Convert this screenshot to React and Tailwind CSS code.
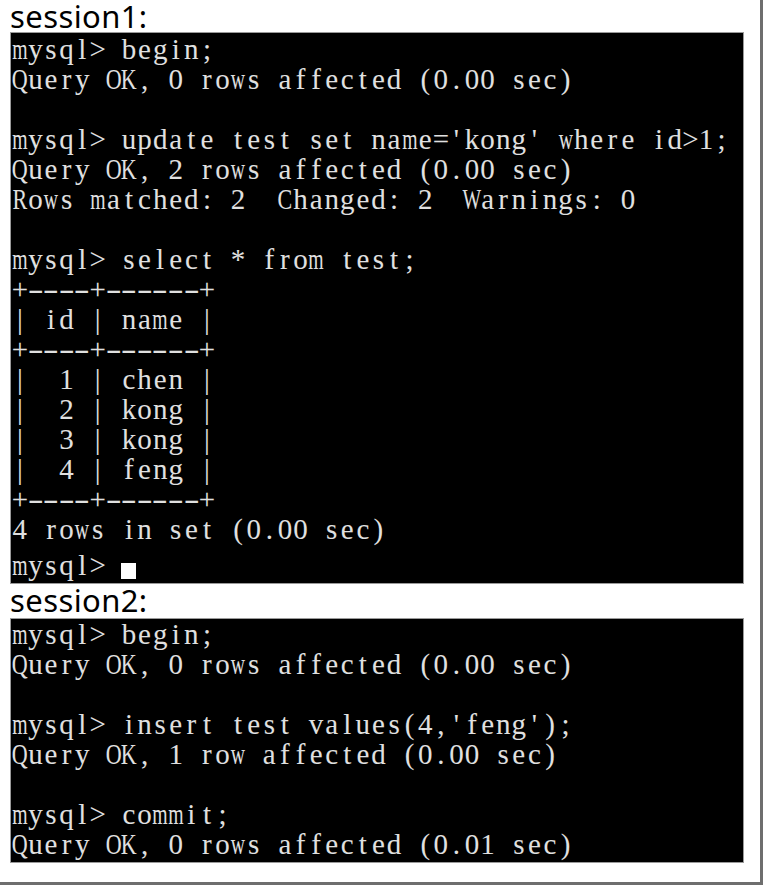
import React from "react";

const block1 = [
  "mysql> begin;",
  "Query OK, 0 rows affected (0.00 sec)",
  "",
  "mysql> update test set name='kong' where id>1;",
  "Query OK, 2 rows affected (0.00 sec)",
  "Rows matched: 2  Changed: 2  Warnings: 0",
  "",
  "mysql> select * from test;",
  "+----+------+",
  "| id | name |",
  "+----+------+",
  "|  1 | chen |",
  "|  2 | kong |",
  "|  3 | kong |",
  "|  4 | feng |",
  "+----+------+",
  "4 rows in set (0.00 sec)",
];

const block2 = [
  "mysql> begin;",
  "Query OK, 0 rows affected (0.00 sec)",
  "",
  "mysql> insert test values(4,'feng');",
  "Query OK, 1 row affected (0.00 sec)",
  "",
  "mysql> commit;",
  "Query OK, 0 rows affected (0.01 sec)",
];

const VERY_WIDE = "mwMW";
const UPPER = "ABCDEFGHIJKLNOPQRSTUVXYZ";

function Cell({ ch, table }) {
  let cls = "flex w-[15.6px] flex-none justify-center whitespace-pre";
  if (ch === "-" && table) {
    cls = "flex w-[15.6px] flex-none justify-center whitespace-pre scale-x-[1.65]";
  } else if (VERY_WIDE.includes(ch)) {
    cls = "flex w-[15.6px] flex-none justify-center whitespace-pre scale-x-[0.68]";
  } else if (UPPER.includes(ch)) {
    cls = "flex w-[15.6px] flex-none justify-center whitespace-pre scale-x-[0.76]";
  }
  return <span className={cls}>{ch}</span>;
}

function Line({ text, cursor, extra }) {
  const table = text.startsWith("+");
  return (
    <div className={"flex h-[30px] leading-[30px] " + (extra || "")}>
      {text.split("").map((ch, i) => (
        <Cell key={i} ch={ch} table={table} />
      ))}
      {cursor && (
        <span className="flex h-[30px] w-[15.6px] flex-none items-end pb-[1px]">
          <span className="block h-[16px] w-[15px] bg-white" />
        </span>
      )}
    </div>
  );
}

export default function App() {
  return (
    <div className="h-[886px] w-[764px] bg-white">
      <div className="h-[885px] w-[763px] border-b-[3px] border-r-[3px] border-[#6e6e6e] bg-white pl-[10px]">
        <div className="h-[32px] pt-[1px] font-['Noto_Sans',sans-serif] text-[31px] leading-[31px] tracking-[0.4px] text-black">
          session1:
        </div>
        <div className="w-[734px] border border-[#9a9a9a] bg-black pb-[3px] pl-[1px] pt-[1px] font-['Liberation_Serif',serif] text-[29px] text-[#e0e0e0]">
          {block1.map((t, i) => (
            <Line key={i} text={t} />
          ))}
          <Line text="mysql> " cursor extra="mt-[6px]" />
        </div>
        <div className="h-[34px] pt-[1px] font-['Noto_Sans',sans-serif] text-[31px] leading-[31px] tracking-[0.4px] text-black">
          session2:
        </div>
        <div className="w-[734px] border border-[#9a9a9a] bg-black pb-[3px] pl-[1px] font-['Liberation_Serif',serif] text-[29px] text-[#e0e0e0]">
          {block2.map((t, i) => (
            <Line key={i} text={t} />
          ))}
        </div>
      </div>
    </div>
  );
}
